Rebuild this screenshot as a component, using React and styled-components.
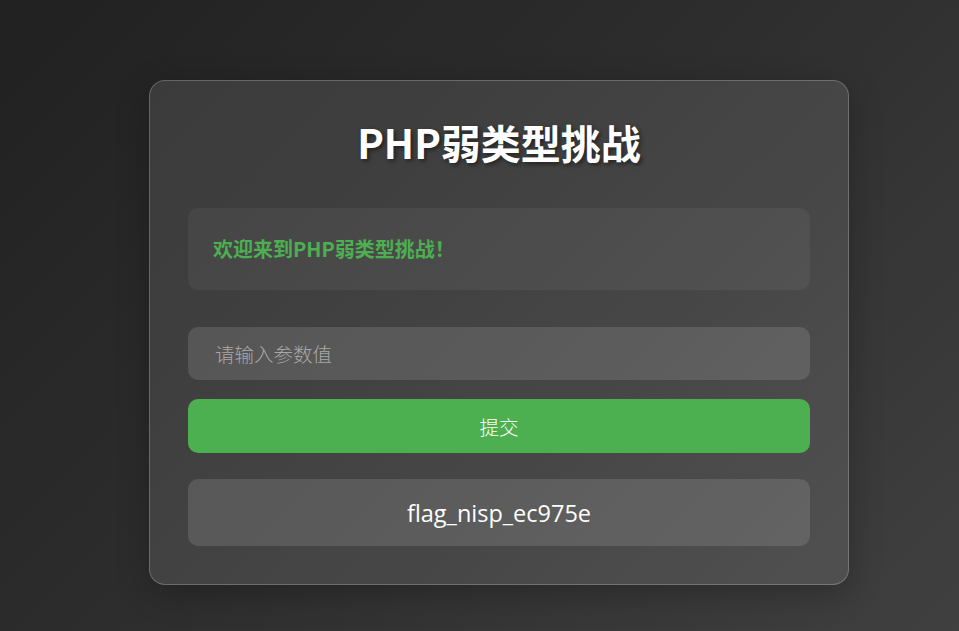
import styled, { createGlobalStyle } from 'styled-components'

const GlobalStyle = createGlobalStyle`
  html, body {
    margin: 0;
    padding: 0;
  }
  body {
    min-height: 100vh;
    background: linear-gradient(135deg, #212121 0%, #2e2e2e 50%, #404040 100%);
    font-family: "Noto Sans CJK SC", "Noto Sans", sans-serif;
    color: #fff;
  }
`

export default function App() {
  return (
    <>
      <GlobalStyle />
      <Page>
        <Card>
          <Title>PHP弱类型挑战</Title>
          <Message>欢迎来到PHP弱类型挑战！</Message>
          <Form onSubmit={(e) => e.preventDefault()}>
            <Input type="text" placeholder="请输入参数值" />
            <SubmitBtn type="submit">提交</SubmitBtn>
          </Form>
          <Flag>flag_nisp_ec975e</Flag>
        </Card>
      </Page>
    </>
  )
}

const Page = styled.div`
  min-height: 100vh;
  box-sizing: border-box;
  display: flex;
  justify-content: center;
  align-items: flex-start;
  padding: 80px 0 0 39px;
`

const Card = styled.div`
  width: 700px;
  box-sizing: border-box;
  padding: 32px 38px 38px;
  background: rgba(255, 255, 255, 0.1);
  border: 1px solid rgba(255, 255, 255, 0.22);
  border-radius: 16px;
  box-shadow: 0 8px 32px rgba(0, 0, 0, 0.25);
  display: flex;
  flex-direction: column;
`

const Title = styled.h1`
  margin: 0 0 37px;
  text-align: center;
  font-size: 40px;
  line-height: 58px;
  font-weight: 700;
  color: #fff;
  text-shadow: 2px 2px 4px rgba(0, 0, 0, 0.5);
`

const Message = styled.div`
  padding: 25px;
  border-radius: 10px;
  background: rgba(255, 255, 255, 0.05);
  color: #4caf50;
  font-size: 20px;
  line-height: 32px;
  font-weight: 700;
`

const Form = styled.form`
  margin-top: 37px;
  display: flex;
  flex-direction: column;
  gap: 19px;
`

const Input = styled.input`
  height: 53px;
  box-sizing: border-box;
  padding: 0 27px;
  border: none;
  outline: none;
  border-radius: 10px;
  background: rgba(255, 255, 255, 0.12);
  color: #fff;
  font-family: "Noto Sans CJK SC", sans-serif;
  font-size: 19.5px;
  font-weight: 300;

  &::placeholder {
    color: #a8a8a8;
  }
`

const SubmitBtn = styled.button`
  height: 54px;
  border: none;
  border-radius: 10px;
  background: #4caf50;
  color: #fff;
  font-family: "Noto Sans CJK SC", sans-serif;
  font-size: 19.5px;
  font-weight: 300;
  cursor: pointer;
`

const Flag = styled.div`
  margin-top: 26px;
  height: 67px;
  border-radius: 10px;
  background: rgba(255, 255, 255, 0.12);
  display: flex;
  align-items: center;
  justify-content: center;
  font-family: "Open Sans", "Noto Sans", sans-serif;
  font-size: 23.5px;
  color: #fff;
`
